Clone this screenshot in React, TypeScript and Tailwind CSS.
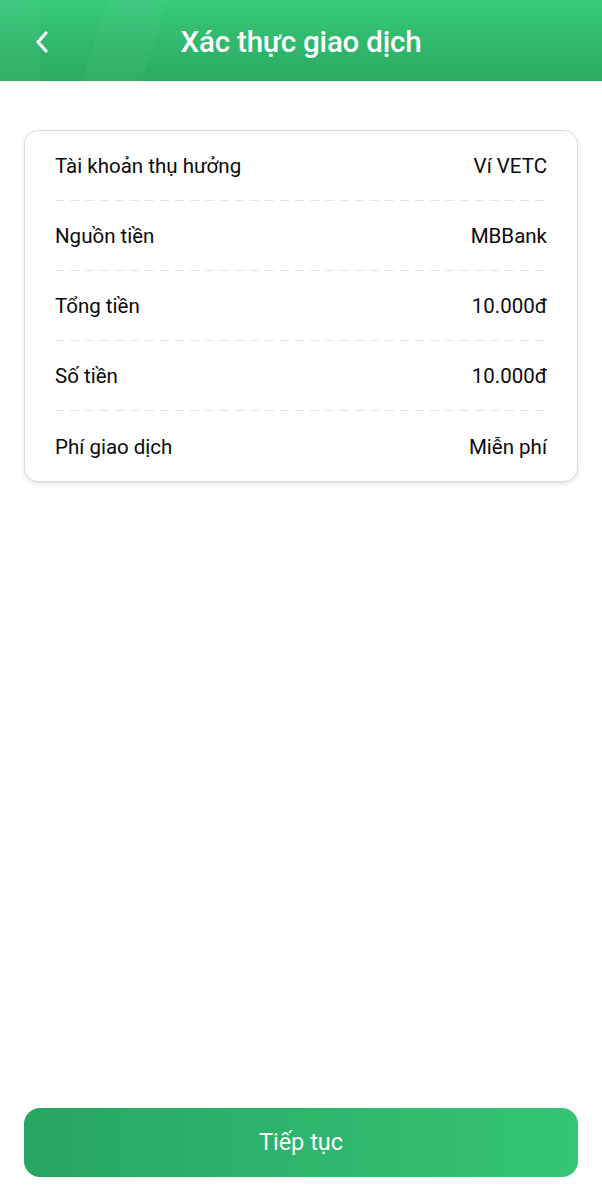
const rows = [
  { label: "Tài khoản thụ hưởng", value: "Ví VETC" },
  { label: "Nguồn tiền", value: "MBBank" },
  { label: "Tổng tiền", value: "10.000đ" },
  { label: "Số tiền", value: "10.000đ" },
  { label: "Phí giao dịch", value: "Miễn phí" },
];

export default function App() {
  return (
    <div className="flex min-h-[1200px] flex-col bg-white font-['Roboto',sans-serif]">
      {/* Header */}
      <header className="relative flex h-[81px] items-center justify-center overflow-hidden bg-gradient-to-b from-[#37c97a] to-[#29aa60]">
        <div className="absolute inset-y-0 left-0 w-[40px] bg-white/[0.04]" />
        <div className="absolute inset-y-0 left-[95px] w-[60px] skew-x-[-18deg] bg-white/[0.04]" />
        <button className="absolute left-[30px] top-[27px] flex h-[30px] w-[24px] items-center justify-center text-white">
          <svg width="16" height="24" viewBox="0 0 16 24" fill="none">
            <path d="M12 3 L4 12 L12 21" stroke="white" strokeWidth="3.2" strokeLinecap="round" strokeLinejoin="round" />
          </svg>
        </button>
        <h1 className="pt-[3px] text-[29.5px] font-medium tracking-[-0.2px] text-white">Xác thực giao dịch</h1>
      </header>

      {/* Detail card */}
      <div className="mx-[24px] mt-[49px] rounded-[14px] border border-[#dcdcdc] bg-white px-[30px] shadow-[0_2px_4px_rgba(0,0,0,0.1)]">
        {rows.map((row, i) => (
          <div key={row.label}>
            <div
              className={`flex items-center justify-between pt-[2px] text-[20.5px] text-[#0a0a0a] ${
                i < rows.length - 1 ? "h-[69px]" : "h-[70px]"
              }`}
            >
              <span>{row.label}</span>
              <span>{row.value}</span>
            </div>
            {i < rows.length - 1 && (
              <div className="h-px bg-[repeating-linear-gradient(to_right,#e4e4e4_0_9px,transparent_9px_15px)]" />
            )}
          </div>
        ))}
      </div>

      {/* Continue */}
      <div className="mt-auto px-[24px] pb-[23px]">
        <button className="flex h-[69px] w-full items-center justify-center rounded-[16px] bg-gradient-to-r from-[#26a660] to-[#35c576] text-[23.5px] text-white">
          Tiếp tục
        </button>
      </div>
    </div>
  );
}
